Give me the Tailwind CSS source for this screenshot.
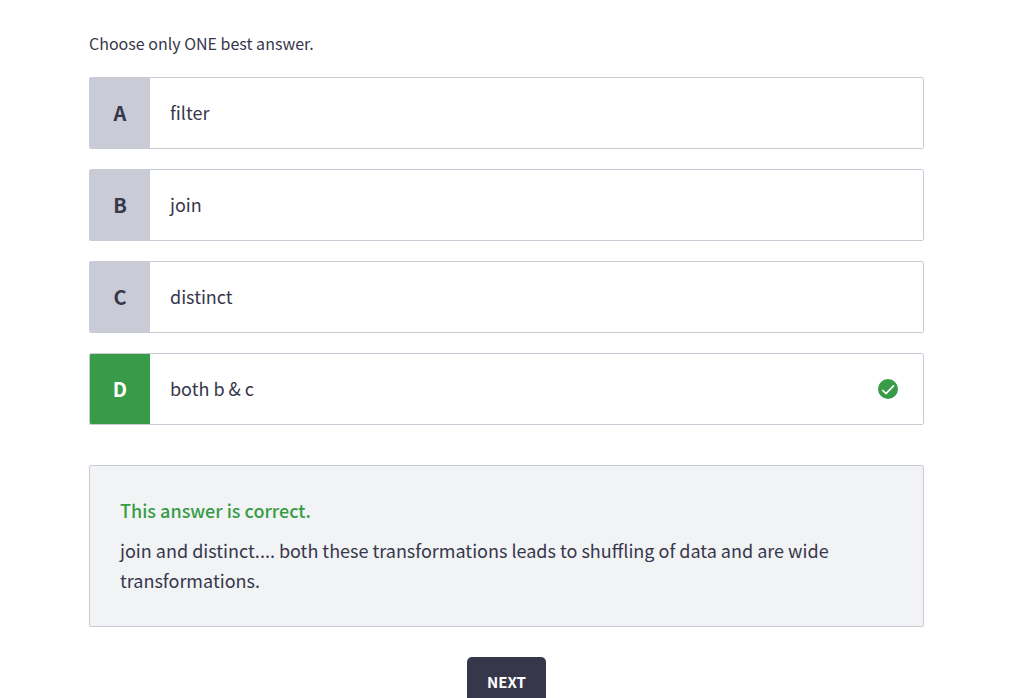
<!DOCTYPE html>
<html lang="en">
<head>
<meta charset="utf-8">
<meta name="viewport" content="width=device-width, initial-scale=1">
<title>Practice question</title>
<script src="https://cdn.jsdelivr.net/npm/@tailwindcss/browser@4"></script>
</head>
<body class="bg-white font-['Noto_Sans_CJK_SC',sans-serif] text-[18px] leading-[30px] text-[#37374c]">
<main class="pt-7 pr-[103px] pb-8 pl-[89px]">
  <form>
    <fieldset>
      <legend class="mb-[19px] text-[16px]">Choose only ONE best answer.</legend>
      <div class="flex flex-col gap-5">
        <label class="relative flex min-h-[72px] cursor-pointer items-stretch overflow-hidden rounded-xs border border-[#c9cbd6]">
          <input class="sr-only" type="radio" name="answer" value="a">
          <span class="flex w-[60px] shrink-0 items-center justify-center bg-[#c9cbd6] text-[20px] font-bold">A</span>
          <span class="flex grow items-center px-5 pb-0.5">filter</span>
        </label>
        <label class="relative flex min-h-[72px] cursor-pointer items-stretch overflow-hidden rounded-xs border border-[#c9cbd6]">
          <input class="sr-only" type="radio" name="answer" value="b">
          <span class="flex w-[60px] shrink-0 items-center justify-center bg-[#c9cbd6] text-[20px] font-bold">B</span>
          <span class="flex grow items-center px-5 pb-0.5">join</span>
        </label>
        <label class="relative flex min-h-[72px] cursor-pointer items-stretch overflow-hidden rounded-xs border border-[#c9cbd6]">
          <input class="sr-only" type="radio" name="answer" value="c">
          <span class="flex w-[60px] shrink-0 items-center justify-center bg-[#c9cbd6] text-[20px] font-bold">C</span>
          <span class="flex grow items-center px-5 pb-0.5">distinct</span>
        </label>
        <label class="relative flex min-h-[72px] cursor-pointer items-stretch overflow-hidden rounded-xs border border-[#c9cbd6]">
          <input class="sr-only" type="radio" name="answer" value="d" checked>
          <span class="flex w-[60px] shrink-0 items-center justify-center bg-[#389b48] text-[20px] font-bold text-white">D</span>
          <span class="flex grow items-center px-5 pb-0.5">both b &amp; c</span>
          <svg class="mr-[25px] size-5 shrink-0 self-center" viewBox="0 0 20 20" fill="none" aria-hidden="true">
            <circle cx="10" cy="10" r="10" fill="#389b48"/>
            <path d="M4.3 11L8 14.6L16 6.4" stroke="#fff" stroke-width="1.7"/>
          </svg>
        </label>
      </div>
    </fieldset>
    <section class="mt-10 rounded-xs border border-[#c9cbd6] bg-[#f1f3f5] px-[30px] pt-[29px] pb-[31px]">
      <h2 class="mb-[10px] font-medium text-[#389b48]">This answer is correct.</h2>
      <p>join and distinct.... both these transformations leads to shuffling of data and are wide transformations.</p>
    </section>
    <div class="mt-[30px] flex justify-center">
      <button type="button" class="h-[50px] rounded-[5px] bg-[#37374c] px-5 text-[15px] font-bold text-white">NEXT</button>
    </div>
  </form>
</main>
</body>
</html>
